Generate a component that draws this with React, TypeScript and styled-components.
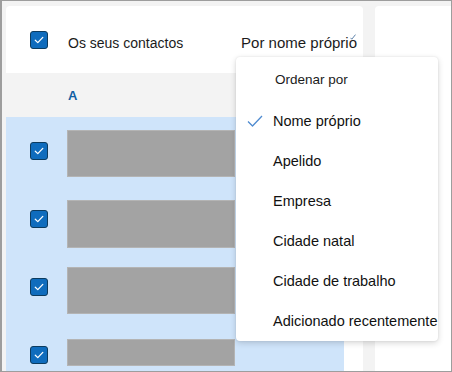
import React from "react";
import styled, { createGlobalStyle } from "styled-components";

const GlobalStyle = createGlobalStyle`
  html, body {
    margin: 0;
    padding: 0;
    background: #ffffff;
  }
  body {
    font-family: "Liberation Sans", Arial, sans-serif;
    color: #242424;
  }
`;

const Frame = styled.div`
  position: relative;
  box-sizing: border-box;
  width: 452px;
  height: 372px;
  overflow: hidden;
  background: #f3f3f3;
  border: 1px solid #9d9d9d;
  border-left-width: 2px;
  padding: 5px 0 0 4px;
  display: flex;
  gap: 12px;
`;

const MainCard = styled.div`
  width: 357px;
  display: flex;
  flex-direction: column;
`;

const Header = styled.div`
  height: 67px;
  flex-shrink: 0;
  background: #ffffff;
  border-radius: 4px 4px 0 0;
  display: flex;
  align-items: center;
  padding: 0 7px 0 24px;
`;

const Title = styled.span`
  margin-left: 20px;
  font-size: 14px;
  color: #1b1b1b;
  flex: 1;
  padding-top: 6px;
`;

const SortLabel = styled.span`
  display: flex;
  align-items: flex-start;
  font-size: 15px;
  color: #1b1b1b;
  padding-top: 5px;
`;

const SortMark = styled.svg`
  width: 6px;
  height: 6px;
  margin-left: -7px;
`;

const Body = styled.div`
  flex: 1;
  display: flex;
  background: #ffffff;
`;

const ListPane = styled.div`
  width: 338px;
  display: flex;
  flex-direction: column;
`;

const LetterRow = styled.div`
  height: 44px;
  background: #f3f3f3;
  display: flex;
  align-items: center;
  padding-left: 62px;
  font-size: 13px;
  font-weight: 700;
  color: #115ea3;
`;

const Selected = styled.div`
  flex: 1;
  background: #cfe4fa;
`;

const Row = styled.div`
  height: 68px;
  display: flex;
  padding-left: 24px;
`;

const CheckCell = styled.div`
  display: flex;
  align-items: center;
`;

const Redacted = styled.div<{ $top: number; $h: number }>`
  box-sizing: border-box;
  margin: ${(p) => p.$top}px 0 0 19px;
  width: 168px;
  height: ${(p) => p.$h}px;
  background: #a3a3a3;
  border: 1px solid #b4b4b4;
`;

const Box = styled.div`
  box-sizing: border-box;
  width: 18px;
  height: 18px;
  border-radius: 3px;
  background: #0f6cbd;
  border: 1px solid #0c3b5e;
  display: flex;
  align-items: center;
  justify-content: center;
`;

const SideCard = styled.div`
  flex: 1;
  background: #ffffff;
  border-radius: 4px 0 0 0;
`;

const Menu = styled.div`
  position: absolute;
  left: 234px;
  top: 56px;
  width: 202px;
  height: 284px;
  background: #ffffff;
  border-radius: 4px;
  box-shadow: 0 2px 6px rgba(0, 0, 0, 0.16), 0 0 2px rgba(0, 0, 0, 0.1);
  display: flex;
  flex-direction: column;
`;

const MenuHeader = styled.div`
  height: 44px;
  display: flex;
  align-items: center;
  padding-left: 39px;
  font-size: 13.5px;
  color: #1b1b1b;
`;

const MenuItem = styled.div`
  height: 40px;
  display: flex;
  align-items: center;
  white-space: nowrap;
  font-size: 14.5px;
  color: #111111;
`;

const CheckSlot = styled.div`
  width: 37px;
  display: flex;
  justify-content: flex-start;
  padding-left: 11px;
  box-sizing: border-box;
`;

const Checkbox = () => (
  <Box>
    <svg width="12" height="12" viewBox="0 0 12 12">
      <path d="M2.3 6.2 L4.8 8.6 L9.8 3.4" fill="none" stroke="#ffffff" strokeWidth="1.3" strokeLinecap="round" strokeLinejoin="round" />
    </svg>
  </Box>
);

const rows = [
  { top: 13, h: 47 },
  { top: 15, h: 48 },
  { top: 14, h: 47 },
  { top: 18, h: 27 },
];

const sortOptions = [
  "Nome próprio",
  "Apelido",
  "Empresa",
  "Cidade natal",
  "Cidade de trabalho",
  "Adicionado recentemente",
];

export default function App() {
  return (
    <>
      <GlobalStyle />
      <Frame>
        <MainCard>
          <Header>
            <Checkbox />
            <Title>Os seus contactos</Title>
            <SortLabel>
              Por nome próprio
              <SortMark viewBox="0 0 6 6">
                <path d="M0.5 3.8 L1.8 5.2 L5.5 0.6" fill="none" stroke="#5f83aa" strokeWidth="1" />
              </SortMark>
            </SortLabel>
          </Header>
          <Body>
            <ListPane>
              <LetterRow>A</LetterRow>
              <Selected>
                {rows.map((r, i) => (
                  <Row key={i}>
                    <CheckCell>
                      <Checkbox />
                    </CheckCell>
                    <Redacted $top={r.top} $h={r.h} />
                  </Row>
                ))}
              </Selected>
            </ListPane>
          </Body>
        </MainCard>
        <SideCard />
        <Menu>
          <MenuHeader>Ordenar por</MenuHeader>
          {sortOptions.map((label, i) => (
            <MenuItem key={label}>
              <CheckSlot>
                {i === 0 && (
                  <svg width="16" height="12" viewBox="0 0 16 12">
                    <path d="M1 6.5 L5.5 11 L15 1" fill="none" stroke="#4f8bd0" strokeWidth="1.3" strokeLinejoin="round" />
                  </svg>
                )}
              </CheckSlot>
              {label}
            </MenuItem>
          ))}
        </Menu>
      </Frame>
    </>
  );
}
